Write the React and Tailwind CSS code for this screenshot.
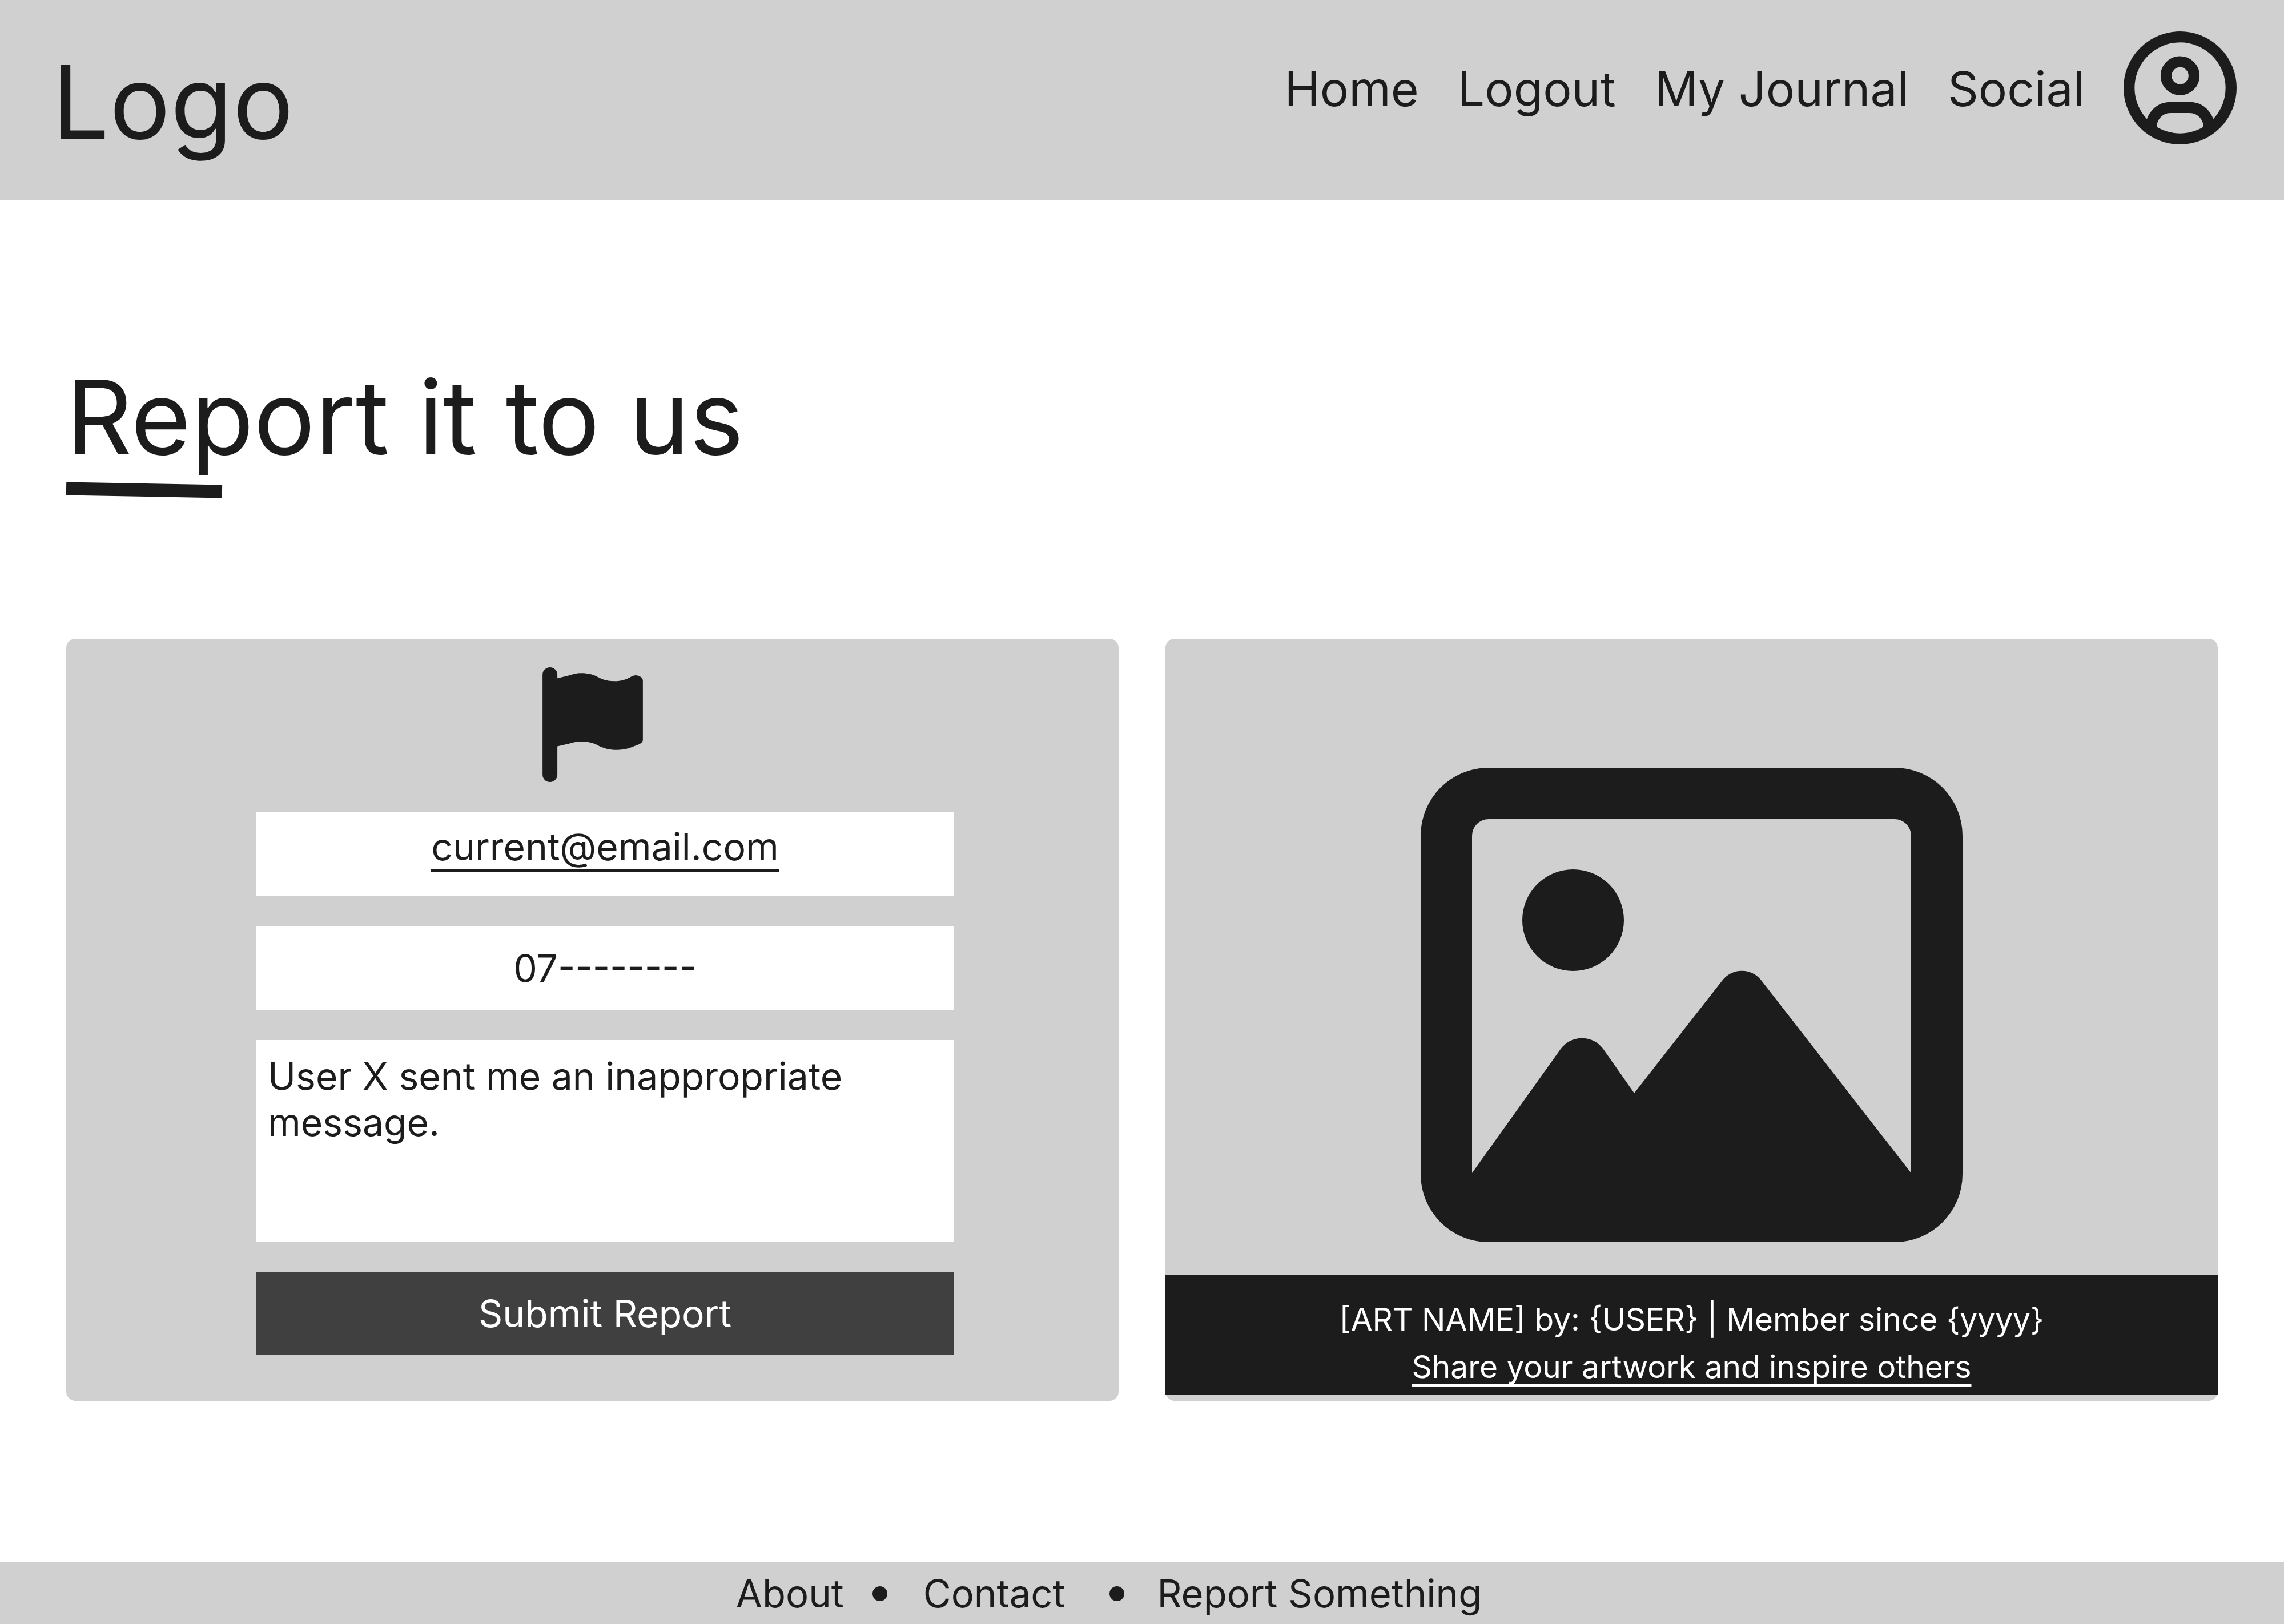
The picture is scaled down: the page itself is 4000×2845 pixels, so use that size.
const navLinks = ["Home", "Logout", "My Journal", "Social"];

function UserCircleIcon() {
  return (
    <svg
      viewBox="117 104 594 594"
      className="size-[198px]"
      fill="none"
      stroke="currentColor"
      strokeWidth="58"
      aria-hidden="true"
    >
      <circle cx="414" cy="401" r="268" />
      <circle cx="414" cy="337" r="73.5" />
      <path d="M264 618A100 100 0 0 1 365 504H463A100 100 0 0 1 564 618" />
    </svg>
  );
}

function FlagIcon() {
  return (
    <svg viewBox="147 86 528 604" className="h-[201px] w-[176px]" fill="currentColor" aria-hidden="true">
      <path d="M147 125A39 39 0 0 1 225 125V144L290 128C305 123 325 117 352 117C385 117 410 124 430 133C455 145 475 158 526 159C560 159 585 151 605 140C625 129 635 126 650 130C665 135 675 143 675 157V470Q673 482 656 491L610 509C580 519 560 521 536 521C500 521 470 513 442 499C425 490 400 478 352 477C325 477 305 483 290 487L225 502V651A39 39 0 0 1 147 651Z" />
    </svg>
  );
}

function PictureIcon() {
  return (
    <svg viewBox="0 0 949 831" className="w-[949px] max-w-full" fill="currentColor" aria-hidden="true">
      <path
        fillRule="evenodd"
        d="M119 0H830A119 119 0 0 1 949 119V712A119 119 0 0 1 830 831H119A119 119 0 0 1 0 712V119A119 119 0 0 1 119 0ZM119 90A29 29 0 0 0 90 119V710L245 493A46 46 0 0 1 320 493L374 570L528 373A43 43 0 0 1 597 373L859 710V119A29 29 0 0 0 830 90Z"
      />
      <circle cx="267" cy="267" r="89" />
    </svg>
  );
}

function Header() {
  return (
    <header className="flex items-start justify-between bg-[#d0d0d0] pr-[83px] pl-[91px]">
      <a href="#" className="pt-[70px] pb-[63px] text-[178px] leading-[218px]">
        Logo
      </a>
      <nav className="flex items-center gap-[68px] pt-[55px] text-[84px] leading-[105px]">
        {navLinks.map((label) => (
          <a key={label} href="#" className="pt-[2px]">
            {label}
          </a>
        ))}
        <a href="#" aria-label="Profile">
          <UserCircleIcon />
        </a>
      </nav>
    </header>
  );
}

function ReportForm() {
  return (
    <section className="rounded-[16px] bg-[#d0d0d0] pt-[50px] pb-[81px]">
      <div className="flex justify-center">
        <FlagIcon />
      </div>
      <form
        className="mt-[52px] flex flex-col gap-[52px] pr-[289px] pl-[333px] text-[66px] leading-[81px]"
        onSubmit={(e) => e.preventDefault()}
      >
        <label className="flex h-[148px] items-start justify-center bg-white pt-[22px]">
          <input
            type="email"
            aria-label="Email"
            defaultValue="current@email.com"
            className="h-[84px] max-w-full border-b-[6px] border-[#1c1c1c] field-sizing-content outline-none"
          />
        </label>
        <input
          type="tel"
          aria-label="Phone number"
          defaultValue="07--------"
          className="h-[148px] w-full bg-white pt-[33px] pb-[34px] text-center outline-none"
        />
        <textarea
          aria-label="Report details"
          defaultValue="User X sent me an inappropriate message."
          className="block h-[354px] w-full resize-none bg-white px-[20px] pt-[23px] outline-none"
        />
        <button type="submit" className="w-full bg-[#404040] pt-[33px] pb-[31px] text-white">
          Submit Report
        </button>
      </form>
    </section>
  );
}

function ArtCard() {
  return (
    <section className="flex flex-col rounded-[16px] bg-[#d0d0d0] pt-[226px] pb-[11px]">
      <div className="flex flex-1 items-start justify-center">
        <PictureIcon />
      </div>
      <div className="flex flex-col items-center bg-[#1c1c1c] pt-[37px] pb-[7px] text-[55px] leading-[83px] text-white">
        <p>[ART NAME] by: {"{USER}"} | Member since {"{yyyy}"}</p>
        <a
          href="#"
          className="underline decoration-[6px] underline-offset-[10px] [text-decoration-skip-ink:none]"
        >
          Share your artwork and inspire others
        </a>
      </div>
    </section>
  );
}

function Footer() {
  return (
    <footer className="flex items-center justify-center bg-[#d0d0d0] pt-[15px] pr-[116px] pb-[13px] text-[67px] leading-[81px]">
      <a href="#">About</a>
      <span className="mr-[63px] ml-[50px] size-[26px] rounded-full bg-[#1c1c1c]" />
      <a href="#">Contact</a>
      <span className="mr-[57px] ml-[78px] size-[26px] rounded-full bg-[#1c1c1c]" />
      <a href="#">Report Something</a>
    </footer>
  );
}

export default function App() {
  return (
    <div className="flex min-h-screen flex-col bg-white font-['Inter',sans-serif] text-[#1c1c1c] [font-optical-sizing:none]">
      <Header />
      <main className="flex-1 px-[116px] pt-[271px]">
        <h1 className="text-[180px] leading-[218px]">Report it to us</h1>
        <div className="mt-[7px] h-[23px] w-[273px] rotate-1 bg-[#1c1c1c]" />
        <div className="mt-[249px] grid grid-cols-2 gap-[82px]">
          <ReportForm />
          <ArtCard />
        </div>
      </main>
      <Footer />
    </div>
  );
}
